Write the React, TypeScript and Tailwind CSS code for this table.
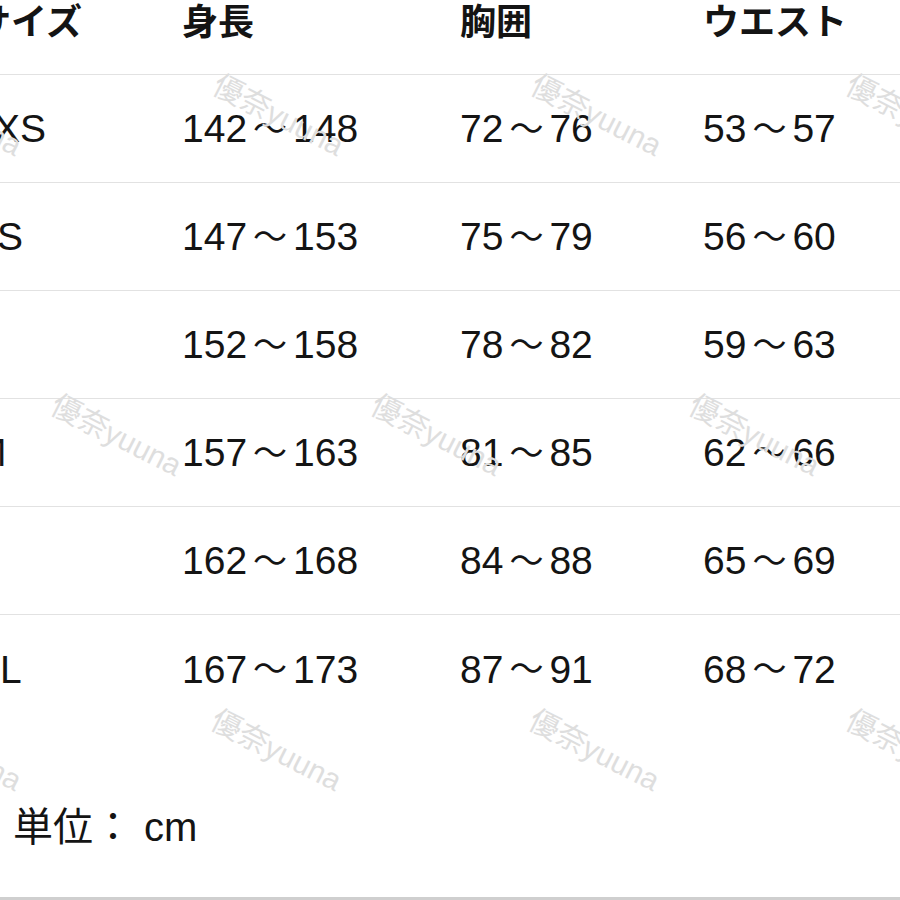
const rows = [
  { label: "XS", labelCls: "-ml-[6px]", height: ["142", "148"], chest: ["72", "76"], waist: ["53", "57"] },
  { label: "S", labelCls: "-ml-[3px]", height: ["147", "153"], chest: ["75", "79"], waist: ["56", "60"] },
  { label: "", labelCls: "", height: ["152", "158"], chest: ["78", "82"], waist: ["59", "63"] },
  { label: "M", labelCls: "-ml-[26px]", height: ["157", "163"], chest: ["81", "85"], waist: ["62", "66"] },
  { label: "", labelCls: "", height: ["162", "168"], chest: ["84", "88"], waist: ["65", "69"] },
  { label: "L", labelCls: "ml-0", height: ["167", "173"], chest: ["87", "91"], waist: ["68", "72"] },
];

// watermark spots, staggered like the original photo
const marks = [
  { left: -100, top: 70 },
  { left: 222, top: 70 },
  { left: 540, top: 70 },
  { left: 855, top: 70 },
  { left: 60, top: 390 },
  { left: 380, top: 390 },
  { left: 698, top: 390 },
  { left: -100, top: 705 },
  { left: 220, top: 705 },
  { left: 538, top: 705 },
  { left: 855, top: 705 },
];

const cols = "grid grid-cols-[182px_278px_243px_1fr]";

const Range = ({ v }: { v: string[] }) => (
  <div className="whitespace-nowrap flex items-center">
    <span>{v[0]}</span>
    <span className="mx-[6px] text-[34px] leading-none">～</span>
    <span>{v[1]}</span>
  </div>
);

const Watermark = ({ left, top }: { left: number; top: number }) => (
  <span
    className="absolute origin-top-left rotate-[27deg] whitespace-nowrap text-[30px] leading-none text-[#dedede] font-['Liberation_Sans','Noto_Sans_CJK_JP',sans-serif] select-none pointer-events-none"
    style={{ left, top }}
  >
    優奈yuuna
  </span>
);

export default function App() {
  return (
    <div className="relative w-[900px] h-[900px] overflow-hidden bg-white text-[#141414] font-['Liberation_Sans','Noto_Sans_CJK_JP',sans-serif]">
      <div className={`${cols} h-[75px] border-b border-[#e2e2e2] text-[36px] leading-none font-semibold`}>
        <div className="pt-[5px] -ml-[25px] whitespace-nowrap">サイズ</div>
        <div className="pt-[5px]">身長</div>
        <div className="pt-[5px]">胸囲</div>
        <div className="pt-[5px]">ウエスト</div>
      </div>

      {rows.map((r, i) => (
        <div
          key={i}
          className={`${cols} h-[108px] items-center text-[39px] leading-none ${
            i < rows.length - 1 ? "border-b border-[#e2e2e2]" : ""
          }`}
        >
          <div className="whitespace-nowrap">
            <span className={`inline-block ${r.labelCls}`}>{r.label}</span>
          </div>
          <Range v={r.height} />
          <Range v={r.chest} />
          <Range v={r.waist} />
        </div>
      ))}

      <div className="pt-[82px] text-[40px] leading-[44px] flex whitespace-pre">
        <span className="-ml-[35px] mr-[8px]">※</span>
        <span>単位： cm</span>
      </div>

      <div className="absolute bottom-0 left-0 right-0 h-[3px] bg-[#cfcfcf]" />

      {marks.map((m, i) => (
        <Watermark key={i} left={m.left} top={m.top} />
      ))}
    </div>
  );
}
